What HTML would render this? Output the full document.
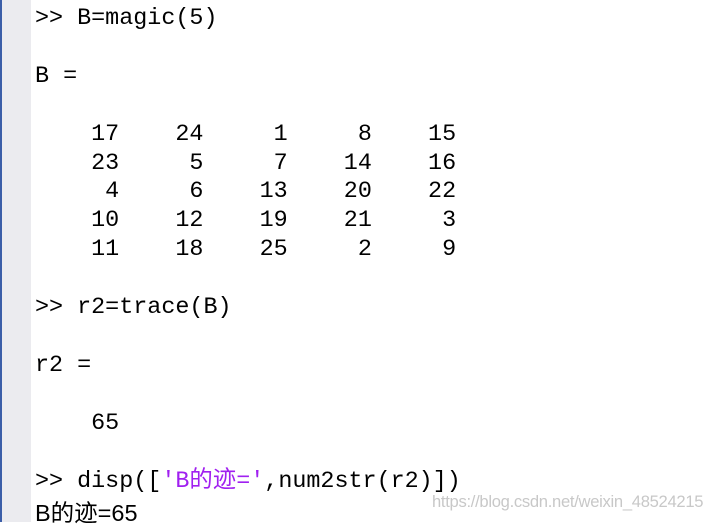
<!DOCTYPE html>
<html><head><meta charset="utf-8"><style>
body{margin:0;width:712px;height:522px;overflow:hidden;background:#fff;position:relative}
.bar{position:absolute;left:0;top:0;width:2px;height:522px;background:#3b5ea8}
.gut{position:absolute;left:2px;top:0;width:29px;height:522px;background:#ebebef}
pre{position:absolute;left:35px;top:5px;margin:0;font-family:"Liberation Mono","Noto Sans CJK SC",monospace;font-size:23.4px;line-height:28.9px;color:#000}
.s{color:#a020f0}
.last{position:absolute;left:35px;top:494px;font-family:"Liberation Sans","Noto Sans CJK SC",sans-serif;font-size:23.5px;color:#000}
.wm{position:absolute;left:432px;top:492px;font-family:"Liberation Sans",sans-serif;font-size:16.6px;color:#c8c8c8;letter-spacing:-0.3px}
</style></head><body>
<div class="bar"></div><div class="gut"></div>
<pre>&gt;&gt; B=magic(5)

B =

    17    24     1     8    15
    23     5     7    14    16
     4     6    13    20    22
    10    12    19    21     3
    11    18    25     2     9

&gt;&gt; r2=trace(B)

r2 =

    65

&gt;&gt; disp([<span class="s">'B的迹='</span>,num2str(r2)])</pre>
<div class="last">B的迹=65</div>
<div class="wm">https://blog.csdn.net/weixin_48524215</div>
</body></html>
